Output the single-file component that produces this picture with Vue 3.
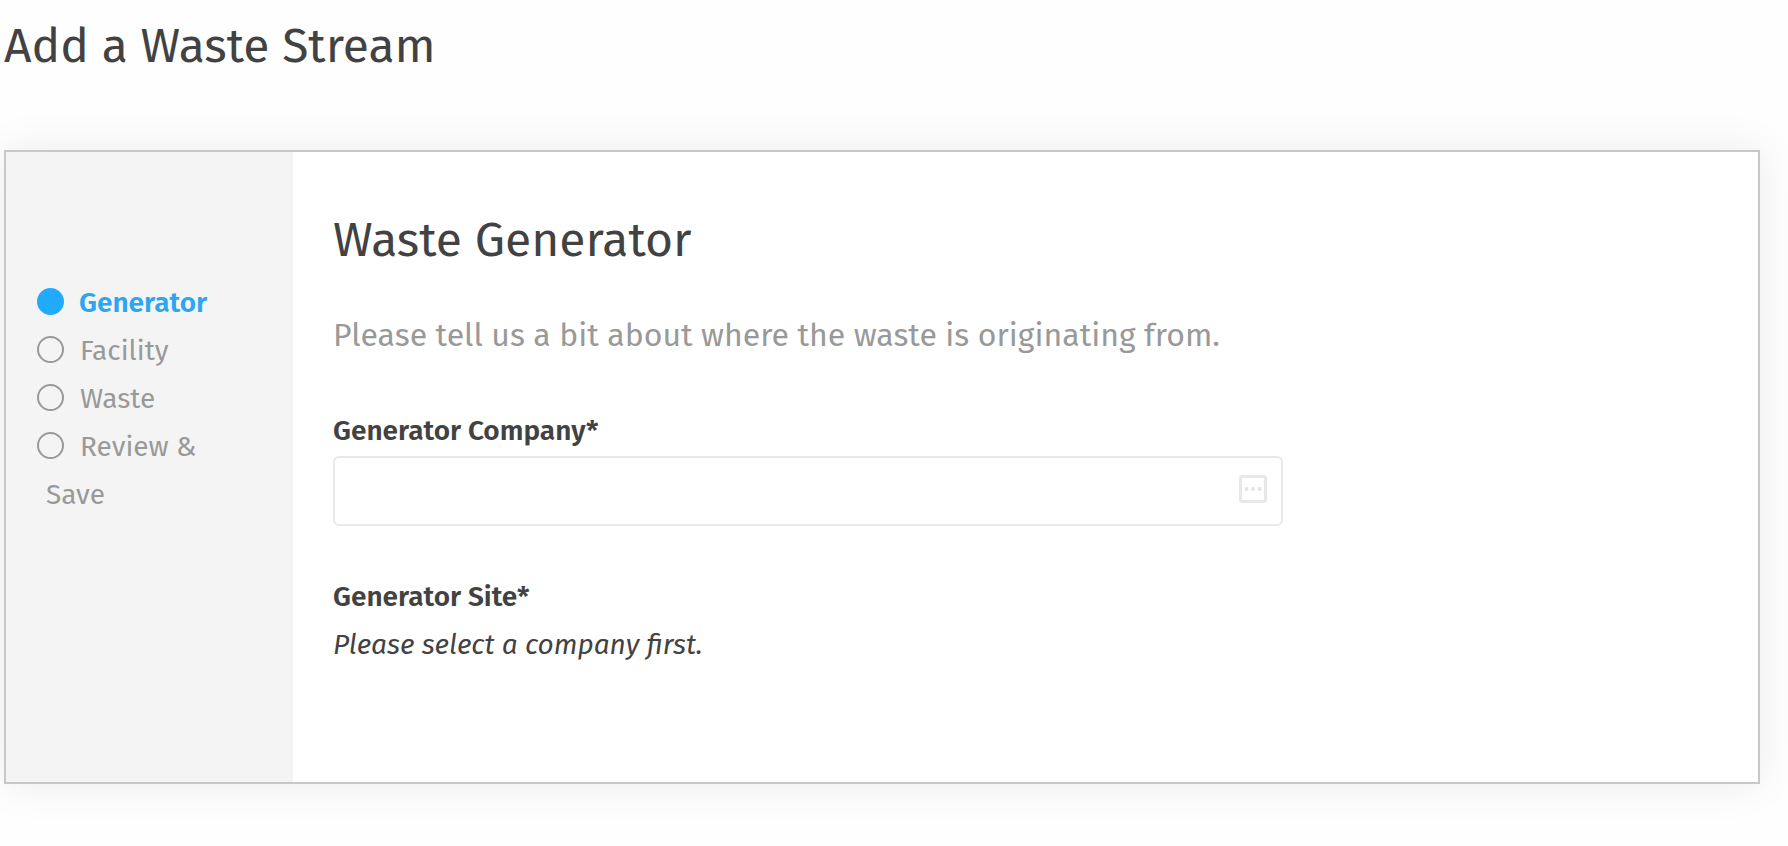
<script setup>
import { ref } from 'vue'

const company = ref('')
const steps = [
  { name: 'Generator', current: true },
  { name: 'Facility', current: false },
  { name: 'Waste', current: false },
  { name: 'Review & Save', current: false },
]
</script>

<template>
  <main class="page">
    <h1 class="heading">Add a Waste Stream</h1>
    <section class="card">
      <nav class="sidebar" aria-label="Progress">
        <ol class="steps">
          <li
            v-for="step in steps"
            :key="step.name"
            class="step"
            :class="{ current: step.current }"
            :aria-current="step.current ? 'step' : undefined"
          ><span class="dot"></span>{{ step.name }}</li>
        </ol>
      </nav>
      <form class="content" @submit.prevent>
        <h2 class="heading">Waste Generator</h2>
        <p class="intro">Please tell us a bit about where the waste is originating from.</p>
        <div class="field">
          <label class="label" for="company">Generator Company*</label>
          <div class="control">
            <input id="company" v-model="company" class="input" type="text" />
            <svg class="icon" viewBox="0 0 28 28" aria-hidden="true">
              <rect x="1.5" y="1.5" width="25" height="25" rx="2" fill="none" stroke="#e8e8e8" stroke-width="3" />
              <circle cx="7.5" cy="14" r="2" fill="#e4e4e4" />
              <circle cx="14" cy="14" r="2" fill="#e4e4e4" />
              <circle cx="20.5" cy="14" r="2" fill="#e4e4e4" />
            </svg>
          </div>
        </div>
        <div class="field">
          <h3 class="label">Generator Site*</h3>
          <p class="hint">Please select a company first.</p>
        </div>
      </form>
    </section>
  </main>
</template>

<style>
body {
  margin: 0;
  background: #fefefe;
}
</style>

<style scoped>
.page {
  padding: 14px 28px 60px 4px;
  color: #424242;
  font-family: "Fira Sans", "Noto Sans", sans-serif;
  font-size: 28px;
  line-height: 48px;
}

.heading {
  margin: 0;
  font-size: 48px;
  font-weight: 400;
  line-height: 64px;
}

.card {
  display: flex;
  margin-top: 72px;
  border: 2px solid #c8c8c8;
  background: #fff;
  box-shadow: 0 0 40px rgba(0, 0, 0, 0.08);
}

.sidebar {
  box-sizing: border-box;
  flex: 0 0 287px;
  padding: 127px 60px 60px 40px;
  background: #f4f4f4;
}

.steps {
  margin: 0;
  padding: 0;
  list-style: none;
}

.step {
  color: #999;
}

.step.current {
  color: #2ba6f2;
  font-weight: 600;
}

.dot {
  display: inline-block;
  box-sizing: border-box;
  width: 27px;
  height: 27px;
  margin: 0 16px 0 -9px;
  border: 2px solid #999;
  border-radius: 50%;
  vertical-align: -3px;
}

.current .dot {
  margin-right: 15px;
  border-color: #22aaff;
  background: #22aaff;
}

.content {
  flex: 1;
  min-width: 0;
  padding: 56px 40px 113px;
}

.intro {
  margin: 39px 0 48px;
  color: #999;
  font-size: 32px;
}

.field + .field {
  margin-top: 47px;
}

.label {
  display: block;
  margin: 0;
  font-size: 28px;
  font-weight: 600;
}

.control {
  position: relative;
  max-width: 950px;
  margin-top: 1px;
}

.input {
  display: block;
  box-sizing: border-box;
  width: 100%;
  height: 70px;
  padding: 0 60px 0 16px;
  border: 2px solid #e8e8e8;
  border-radius: 6px;
  background: #fff;
  color: inherit;
  font: inherit;
}

.icon {
  position: absolute;
  top: 19px;
  right: 16px;
  width: 28px;
  height: 28px;
}

.hint {
  margin: 0;
  font-style: italic;
}
</style>
